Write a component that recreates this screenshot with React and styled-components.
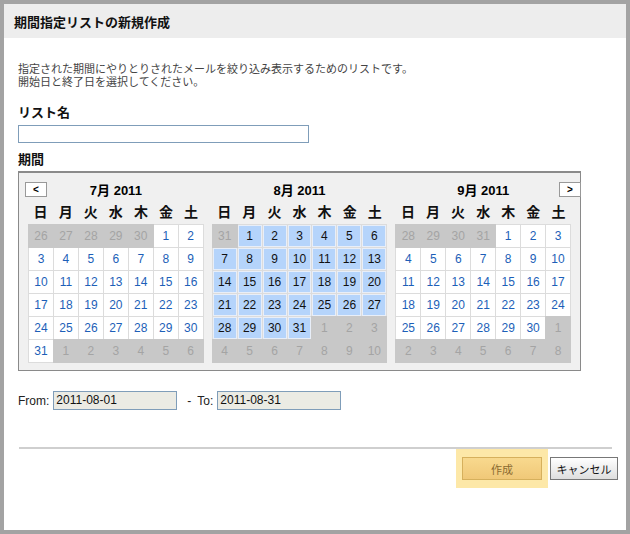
import styled, { createGlobalStyle } from "styled-components";

const Global = createGlobalStyle`
  body { margin: 0; background: #fff; font-family: "Liberation Sans", "Noto Sans CJK JP", sans-serif; }
`;

const Frame = styled.div`
  width: 630px;
  height: 534px;
  box-sizing: border-box;
  border: 4px solid #a3a3a3;
  background: #fff;
  display: flex;
  flex-direction: column;
`;

const Header = styled.div`
  height: 34px;
  background: #ededed;
  display: flex;
  align-items: center;
  padding-left: 10px;
  font-size: 13px;
  font-weight: bold;
  color: #111;
`;

const Body = styled.div`
  padding: 25px 14px 0 14px;
  display: flex;
  flex-direction: column;
`;

const Desc = styled.p`
  margin: 0;
  font-size: 11px;
  line-height: 13px;
  color: #444;
`;

const Label = styled.div`
  font-size: 13px;
  font-weight: bold;
  color: #111;
  line-height: 16px;
  margin: ${(p) => p.$top}px 0 ${(p) => p.$bottom}px;
`;

const TextInput = styled.div`
  width: 291px;
  height: 18px;
  box-sizing: border-box;
  border: 1px solid #7f9db9;
  background: #fff;
`;

const Panel = styled.div`
  width: 563px;
  box-sizing: border-box;
  border: 1px solid #8a8a8a;
  border-top-width: 2px;
  background: #f0f0f0;
  padding: 7px 9px 7px 9px;
  display: flex;
  gap: 8px;
`;

const Month = styled.div`
  width: 176px;
  display: flex;
  flex-direction: column;
`;

const MonthHead = styled.div`
  height: 18px;
  display: flex;
  align-items: center;
  justify-content: center;
  position: relative;
  font-size: 13px;
  font-weight: bold;
`;

const Nav = styled.span`
  position: absolute;
  ${(p) => (p.$side === "left" ? "left: -3px;" : "right: -10px;")}
  top: 2px;
  width: 20px;
  height: 13px;
  border: 1px solid #999;
  background: #fff;
  font-size: 10px;
  line-height: 13px;
  text-align: center;
  font-weight: bold;
`;

const Week = styled.div`
  display: grid;
  grid-template-columns: repeat(7, 1fr);
  height: 26px;
  align-items: center;
  text-align: center;
  font-size: 14px;
  font-weight: bold;
  color: #111;
`;

const Grid = styled.div`
  display: grid;
  grid-template-columns: repeat(7, 1fr);
  grid-auto-rows: 22px;
  gap: 1px;
  background: #dcdcdc;
  border: 1px solid #dcdcdc;
`;

const Cell = styled.div`
  display: flex;
  align-items: center;
  justify-content: center;
  font-size: 12px;
  background: ${(p) => (p.$kind === "out" ? "#c8c8c8" : p.$kind === "sel" ? "#b5d4fb" : "#fff")};
  color: ${(p) => (p.$kind === "out" ? "#a4a4a4" : p.$kind === "sel" ? "#111" : "#1d5fb8")};
  box-shadow: ${(p) => (p.$kind === "out" ? "0 0 0 1px #c8c8c8" : p.$kind === "sel" ? "inset 0 0 0 1px #e8eef8" : "none")};
  position: relative;
`;

const Range = styled.div`
  display: flex;
  align-items: center;
  margin-top: 20px;
  font-size: 12px;
  color: #222;
`;

const Sep = styled.span`
  margin: 0 6px 0 10px;
`;

const DateBox = styled.div`
  width: 124px;
  height: 19px;
  box-sizing: border-box;
  border: 1px solid #7f9db9;
  background: #ebebe4;
  font-size: 12px;
  line-height: 17px;
  padding-left: 2px;
  margin-left: 4px;
  color: #111;
`;

const Divider = styled.div`
  height: 2px;
  background: #cfcfcf;
  margin: 37px 6px 0 1px;
  width: 593px;
`;

const Actions = styled.div`
  display: flex;
  justify-content: flex-end;
  align-items: center;
  gap: 2px;
  padding: 0 4px 0 0;
  width: 600px;
  margin-top: -8px;
`;

const Glow = styled.div`
  background: #fde8a8;
  padding: 8px 6px;
  margin-top: 8px;
`;

const Button = styled.div`
  height: 23px;
  box-sizing: border-box;
  display: flex;
  align-items: center;
  justify-content: center;
  font-size: 11px;
  width: ${(p) => p.$w}px;
  border: 1px solid ${(p) => (p.$primary ? "#d6b05c" : "#777")};
  background: ${(p) => (p.$primary ? "linear-gradient(#f8d98e, #f0c878)" : "linear-gradient(#fff, #dedede)")};
  color: ${(p) => (p.$primary ? "#8a6a30" : "#111")};
  margin-top: ${(p) => (p.$primary ? 0 : 8)}px;
`;

const WEEK = ["日", "月", "火", "水", "木", "金", "土"];

function build(firstDow, days, prevDays, selected) {
  const cells = [];
  for (let i = firstDow - 1; i >= 0; i--) cells.push({ d: prevDays - i, k: "out" });
  for (let d = 1; d <= days; d++) cells.push({ d, k: selected ? "sel" : "in" });
  let n = 1;
  while (cells.length < 42) cells.push({ d: n++, k: "out" });
  return cells;
}

const MONTHS = [
  { title: "7月 2011", cells: build(5, 31, 30, false), nav: "left" },
  { title: "8月 2011", cells: build(1, 31, 31, true) },
  { title: "9月 2011", cells: build(4, 30, 31, false), nav: "right" },
];

export default function App() {
  return (
    <>
      <Global />
      <Frame>
        <Header>期間指定リストの新規作成</Header>
        <Body>
          <Desc>
            指定された期間にやりとりされたメールを絞り込み表示するためのリストです。
            <br />
            開始日と終了日を選択してください。
          </Desc>
          <Label $top={16} $bottom={4}>リスト名</Label>
          <TextInput />
          <Label $top={9} $bottom={3}>期間</Label>
          <Panel>
            {MONTHS.map((m) => (
              <Month key={m.title}>
                <MonthHead>
                  {m.nav && <Nav $side={m.nav}>{m.nav === "left" ? "<" : ">"}</Nav>}
                  {m.title}
                </MonthHead>
                <Week>
                  {WEEK.map((w) => (
                    <span key={w}>{w}</span>
                  ))}
                </Week>
                <Grid>
                  {m.cells.map((c, i) => (
                    <Cell key={i} $kind={c.k}>
                      {c.d}
                    </Cell>
                  ))}
                </Grid>
              </Month>
            ))}
          </Panel>
          <Range>
            From:
            <DateBox>2011-08-01</DateBox>
            <Sep>-</Sep>
            To:
            <DateBox>2011-08-31</DateBox>
          </Range>
          <Divider />
          <Actions>
            <Glow>
              <Button $primary $w={80}>作成</Button>
            </Glow>
            <Button $w={68}>キャンセル</Button>
          </Actions>
        </Body>
      </Frame>
    </>
  );
}
